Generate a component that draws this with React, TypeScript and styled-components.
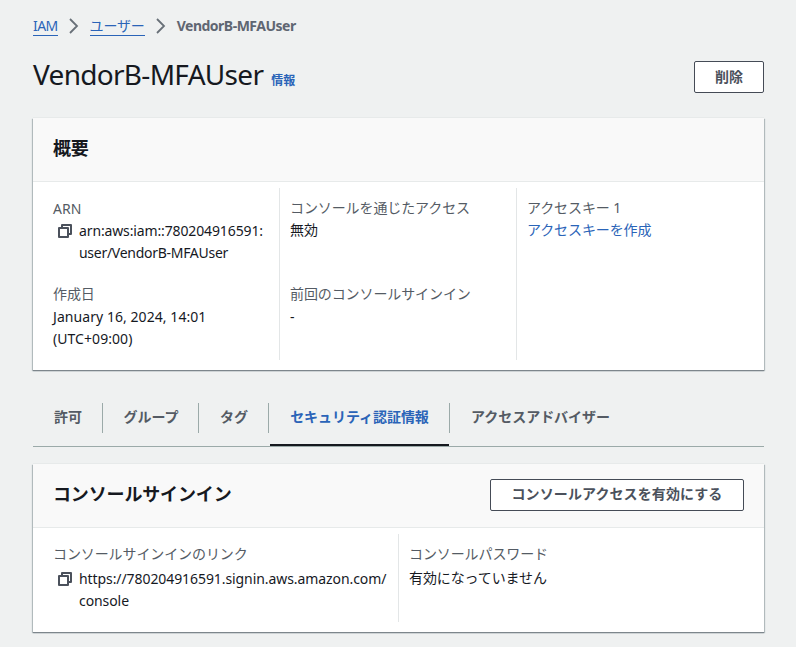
import React from 'react';
import styled, { createGlobalStyle } from 'styled-components';

const GlobalStyle = createGlobalStyle`
  * { box-sizing: border-box; }
  body {
    margin: 0;
    background: #eff1f1;
    color: #16191f;
    font: 14px/22px 'Noto Sans', 'Noto Sans CJK JP', sans-serif;
  }
`;

const Page = styled.main`
  width: 796px;
  height: 647px;
  padding: 14px 31px 0 33px;
  overflow: hidden;
`;

const Breadcrumbs = styled.nav`
  display: flex;
  align-items: center;
  height: 22px;
`;

const Crumb = styled.a<{ $spacing?: number }>`
  height: 22px;
  line-height: 24px;
  color: #2a64b8;
  border-bottom: 1px solid #2a64b8;
  letter-spacing: ${(p) => p.$spacing ?? 0}px;
  white-space: nowrap;
`;

const CurrentCrumb = styled.span`
  padding-top: 2px;
  font-weight: 700;
  color: #5f6672;
  letter-spacing: -0.5px;
`;

const Chevron = styled.svg`
  width: 16px;
  height: 16px;
  margin: 1px 8px 0;
  fill: none;
  stroke: #687078;
  stroke-width: 1.8;
`;

const TitleRow = styled.header`
  display: flex;
  justify-content: space-between;
  height: 57px;
  margin-top: 25px;
  padding-right: 1px;
`;

const TitleGroup = styled.div`
  display: flex;
  align-items: baseline;
  height: 30px;
`;

const Title = styled.h1`
  margin: -2px 0 0;
  font-size: 28px;
  line-height: 30px;
  font-weight: 400;
  letter-spacing: -0.7px;
`;

const InfoLink = styled.a`
  margin-left: 8px;
  font-size: 12px;
  font-weight: 700;
  color: #2a64b8;
`;

const Button = styled.button<{ $width: number }>`
  width: ${(p) => p.$width}px;
  height: 32px;
  padding: 0 0 3px;
  border: 1px solid #454b56;
  border-radius: 2px;
  background: #fff;
  color: #4b515c;
  font: 700 14px/22px 'Noto Sans CJK JP', sans-serif;
  letter-spacing: 0.1px;
  white-space: nowrap;
`;

const Card = styled.section<{ $height: number }>`
  height: ${(p) => p.$height}px;
  width: 731px;
  background: #fff;
  box-shadow: 0 -1px 0 #e7eaea, 0 1px 1px #7d868c, 1px 1px 1px #bcc4c6, -1px 1px 1px #bcc4c6;
`;

const CardHeader = styled.header`
  display: flex;
  align-items: center;
  justify-content: space-between;
  height: 64px;
  padding: 0 20px 2px;
  background: #f9f9f9;
  border-bottom: 1px solid #e7eaea;
`;

const CardTitle = styled.h2`
  margin: 0;
  padding-bottom: 4px;
  font: 700 18px/22px 'Noto Sans CJK JP', sans-serif;
  letter-spacing: -0.15px;
`;

const Columns = styled.div<{ $template: string; $height: number }>`
  display: grid;
  grid-template-columns: ${(p) => p.$template};
  grid-template-rows: ${(p) => p.$height}px;
  margin: 6px 20px 0;
`;

const Column = styled.div`
  padding: 10px 0 0 10px;
  border-left: 1px solid #e3e6e7;

  &:first-child {
    padding-left: 0;
    border-left: 0;
  }
`;

const Field = styled.dl<{ $gap?: number }>`
  display: flex;
  flex-direction: column;
  gap: ${(p) => p.$gap ?? 0}px;
  height: 86px;
  margin: 0;
`;

const Label = styled.dt`
  display: flow-root;
  height: 22px;
  color: #545b64;
  white-space: nowrap;
`;

const JpText = styled.span`
  display: block;
  margin-top: -1px;
  letter-spacing: -0.1px;
`;

const Value = styled.dd<{ $spacing?: number }>`
  display: flow-root;
  margin: 0;
  white-space: nowrap;
  letter-spacing: ${(p) => p.$spacing ?? 0}px;
`;

const CopyValue = styled(Value)`
  display: flex;
  gap: 6px;
  padding-left: 4px;
`;

const TightLine = styled.span`
  letter-spacing: -0.28px;
`;

const LinkText = styled(JpText)`
  color: #2a64b8;
`;

const CopySvg = styled.svg`
  flex: none;
  width: 16px;
  height: 16px;
  margin-top: 3px;
  fill: none;
  stroke: #4b515c;
  stroke-width: 2;
  stroke-linejoin: round;
`;

const Tabs = styled.nav`
  display: flex;
  width: 731px;
  height: 51px;
  margin: 26px 0 17px;
  border-bottom: 1px solid #9baaa9;
`;

const Tab = styled.a<{ $width: number; $active?: boolean }>`
  display: flex;
  justify-content: center;
  width: ${(p) => p.$width}px;
  height: 50px;
  padding: 9px 0 0 ${(p) => (p.$active ? 0 : 1)}px;
  color: ${(p) => (p.$active ? '#2a64b8' : '#545b64')};
  border-bottom: ${(p) => (p.$active ? '2px solid #16191f' : '0')};
  margin-left: ${(p) => (p.$active ? 1 : 0)}px;
  font: 700 14px/22px 'Noto Sans CJK JP', sans-serif;
  letter-spacing: -0.05px;
  white-space: nowrap;
`;

const Divider = styled.span`
  width: 1px;
  height: 30px;
  margin-top: 7px;
  background: #9baaa9;
`;

const Separator = () => (
  <Chevron viewBox="0 0 16 16">
    <path d="M4 1l7 7-7 7" />
  </Chevron>
);

const CopyIcon = () => (
  <CopySvg viewBox="0 0 16 16">
    <path d="M2 5h9v9H2z" />
    <path d="M5 5V2h9v9h-3" />
  </CopySvg>
);

export default function App() {
  return (
    <>
      <GlobalStyle />
      <Page>
        <Breadcrumbs>
          <Crumb $spacing={-0.6}>IAM</Crumb>
          <Separator />
          <Crumb $spacing={-0.15}>ユーザー</Crumb>
          <Separator />
          <CurrentCrumb>VendorB-MFAUser</CurrentCrumb>
        </Breadcrumbs>

        <TitleRow>
          <TitleGroup>
            <Title>VendorB-MFAUser</Title>
            <InfoLink>情報</InfoLink>
          </TitleGroup>
          <Button $width={70}>削除</Button>
        </TitleRow>

        <Card $height={252}>
          <CardHeader>
            <CardTitle>概要</CardTitle>
          </CardHeader>
          <Columns $template="226px 237px 1fr" $height={172}>
            <Column>
              <Field>
                <Label>ARN</Label>
                <CopyValue $spacing={-0.13}>
                  <CopyIcon />
                  <span>arn:aws:iam::780204916591:<br /><TightLine>user/VendorB-MFAUser</TightLine></span>
                </CopyValue>
              </Field>
              <Field>
                <Label><JpText>作成日</JpText></Label>
                <Value $spacing={0.06}>January 16, 2024, 14:01<br />(UTC+09:00)</Value>
              </Field>
            </Column>
            <Column>
              <Field>
                <Label><JpText>コンソールを通じたアクセス</JpText></Label>
                <Value><JpText>無効</JpText></Value>
              </Field>
              <Field>
                <Label><JpText>前回のコンソールサインイン</JpText></Label>
                <Value>-</Value>
              </Field>
            </Column>
            <Column>
              <Field>
                <Label><JpText>アクセスキー 1</JpText></Label>
                <Value><LinkText as="a">アクセスキーを作成</LinkText></Value>
              </Field>
            </Column>
          </Columns>
        </Card>

        <Tabs>
          <Tab $width={69}>許可</Tab>
          <Divider />
          <Tab $width={95}>グループ</Tab>
          <Divider />
          <Tab $width={69}>タグ</Tab>
          <Divider />
          <Tab $width={179} $active>セキュリティ認証情報</Tab>
          <Divider />
          <Tab $width={180}>アクセスアドバイザー</Tab>
        </Tabs>

        <Card $height={168}>
          <CardHeader>
            <CardTitle>コンソールサインイン</CardTitle>
            <Button $width={254}>コンソールアクセスを有効にする</Button>
          </CardHeader>
          <Columns $template="345px 1fr" $height={88}>
            <Column>
              <Field $gap={2}>
                <Label><JpText>コンソールサインインのリンク</JpText></Label>
                <CopyValue $spacing={-0.08}>
                  <CopyIcon />
                  <span>https://780204916591.signin.aws.amazon.com/<br />console</span>
                </CopyValue>
              </Field>
            </Column>
            <Column>
              <Field $gap={2}>
                <Label><JpText>コンソールパスワード</JpText></Label>
                <Value><JpText>有効になっていません</JpText></Value>
              </Field>
            </Column>
          </Columns>
        </Card>
      </Page>
    </>
  );
}
